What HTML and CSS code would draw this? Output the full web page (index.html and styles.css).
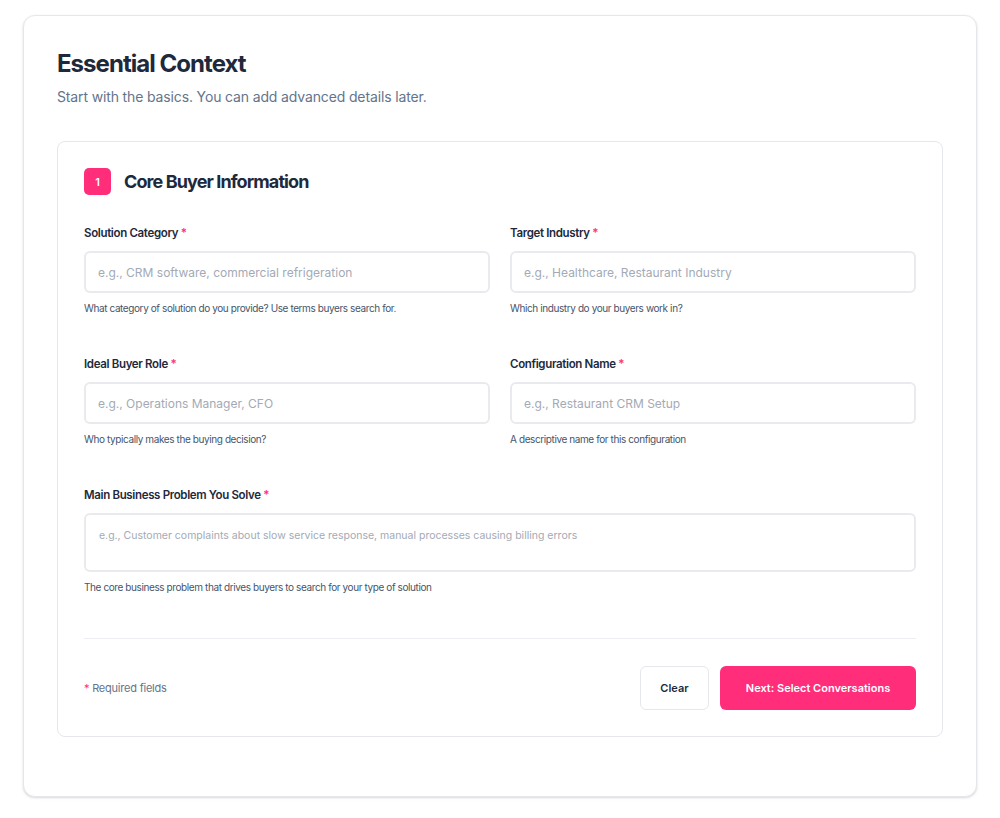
FILE: index.html
```html
<!DOCTYPE html>
<html lang="en">
<head>
<meta charset="utf-8">
<title>Essential Context</title>
<link rel="stylesheet" href="styles.css">
</head>
<body>
<div class="page">
  <main class="card">
    <h1 class="title">Essential Context</h1>
    <p class="subtitle">Start with the basics. You can add advanced details later.</p>

    <section class="section">
      <div class="section-head">
        <span class="badge">1</span>
        <h2 class="section-title">Core Buyer Information</h2>
      </div>

      <div class="grid">
        <div class="field">
          <label class="label">Solution Category <span class="req">*</span></label>
          <input class="input" type="text" placeholder="e.g., CRM software, commercial refrigeration">
          <p class="help">What category of solution do you provide? Use terms buyers search for.</p>
        </div>
        <div class="field">
          <label class="label">Target Industry <span class="req">*</span></label>
          <input class="input" type="text" placeholder="e.g., Healthcare, Restaurant Industry">
          <p class="help">Which industry do your buyers work in?</p>
        </div>
        <div class="field">
          <label class="label">Ideal Buyer Role <span class="req">*</span></label>
          <input class="input" type="text" placeholder="e.g., Operations Manager, CFO">
          <p class="help">Who typically makes the buying decision?</p>
        </div>
        <div class="field">
          <label class="label">Configuration Name <span class="req">*</span></label>
          <input class="input" type="text" placeholder="e.g., Restaurant CRM Setup">
          <p class="help">A descriptive name for this configuration</p>
        </div>
        <div class="field full">
          <label class="label">Main Business Problem You Solve <span class="req">*</span></label>
          <textarea class="input textarea" placeholder="e.g., Customer complaints about slow service response, manual processes causing billing errors"></textarea>
          <p class="help">The core business problem that drives buyers to search for your type of solution</p>
        </div>
      </div>

      <div class="footer">
        <p class="note"><span class="req">*</span> Required fields</p>
        <div class="actions">
          <button class="btn btn-secondary" type="button">Clear</button>
          <button class="btn btn-primary" type="button">Next: Select Conversations</button>
        </div>
      </div>
    </section>
  </main>
</div>
</body>
</html>
```

FILE: styles.css
```css
* { box-sizing: border-box; }

html, body {
  margin: 0;
  padding: 0;
  background: #ffffff;
  font-family: Inter, "Noto Sans", "Liberation Sans", sans-serif;
  color: #1e293b;
}

.page {
  padding: 15px 23px 20px;
}

.card {
  background: #fff;
  border: 1px solid #e5e7eb;
  border-radius: 12px;
  padding: 32px 33px 59px;
  box-shadow: 0 1px 3px rgba(0, 0, 0, 0.10), 0 1px 2px rgba(0, 0, 0, 0.06);
}

.title {
  margin: 0;
  font-size: 24px;
  line-height: 32px;
  font-weight: 700;
  letter-spacing: -0.04em;
  color: #1e293b;
}

.subtitle {
  margin: 5px 0 0;
  font-size: 14px;
  line-height: 24px;
  letter-spacing: -0.01em;
  color: #64748b;
}

.section {
  margin-top: 32px;
  border: 1px solid #e5e7eb;
  border-radius: 8px;
  padding: 26px;
}

.section-head {
  display: flex;
  align-items: center;
  gap: 13px;
  margin-bottom: 30px;
}

.badge {
  width: 27px;
  height: 27px;
  border-radius: 5px;
  background: #ff2d7a;
  color: #fff;
  font-size: 11px;
  font-weight: 600;
  display: flex;
  align-items: center;
  justify-content: center;
}

.section-title {
  margin: 0;
  font-size: 18px;
  line-height: 24px;
  font-weight: 700;
  letter-spacing: -0.05em;
  color: #1e293b;
}

.grid {
  display: grid;
  grid-template-columns: 1fr 1fr;
  column-gap: 20px;
  row-gap: 40px;
}

.field {
  display: flex;
  flex-direction: column;
}

.field.full {
  grid-column: 1 / -1;
}

.label {
  font-size: 11.5px;
  line-height: 16px;
  font-weight: 600;
  color: #1e293b;
  margin-bottom: 10px;
  letter-spacing: -0.03em;
}

.req {
  color: #ff2d7a;
}

.input {
  height: 42px;
  border: 2px solid #e8eaee;
  border-radius: 6px;
  padding: 0 12px;
  font-family: inherit;
  font-size: 12px;
  color: #1e293b;
  background: #fff;
  outline: none;
}

.input::placeholder {
  color: #a3aab6;
}

.textarea {
  height: 59px;
  padding: 13px 13px;
  font-size: 10.5px;
  line-height: 16px;
  resize: none;
}

.help {
  margin: 8px 0 0;
  font-size: 10px;
  line-height: 15px;
  color: #475569;
  letter-spacing: -0.04em;
}

.footer {
  margin-top: 43px;
  border-top: 1px solid #eceef1;
  padding-top: 27px;
  display: flex;
  align-items: center;
  justify-content: space-between;
}

.note {
  margin: 0;
  font-size: 11px;
  line-height: 16px;
  letter-spacing: -0.02em;
  color: #64748b;
}

.actions {
  display: flex;
  gap: 11px;
}

.btn {
  height: 44px;
  border-radius: 6px;
  font-family: inherit;
  font-size: 11px;
  font-weight: 600;
  cursor: pointer;
}

.btn-secondary {
  width: 69px;
  background: #fff;
  border: 1px solid #e5e7eb;
  color: #1e293b;
}

.btn-primary {
  width: 196px;
  background: #ff2d7a;
  border: none;
  color: #fff;
}
```
